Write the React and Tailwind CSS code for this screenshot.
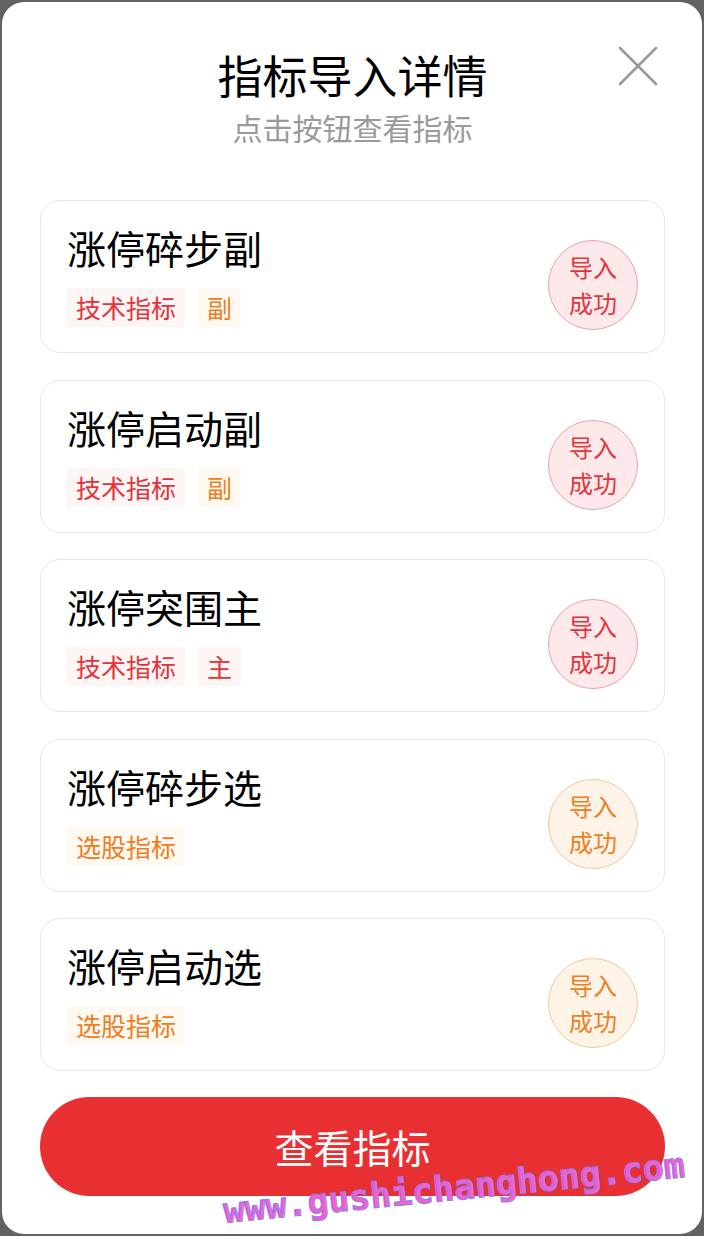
import React from 'react'

const items = [
  { name: '涨停碎步副', tags: [{ label: '技术指标', tone: 'red' }, { label: '副', tone: 'orange' }], tone: 'red' },
  { name: '涨停启动副', tags: [{ label: '技术指标', tone: 'red' }, { label: '副', tone: 'orange' }], tone: 'red' },
  { name: '涨停突围主', tags: [{ label: '技术指标', tone: 'red' }, { label: '主', tone: 'red' }], tone: 'red' },
  { name: '涨停碎步选', tags: [{ label: '选股指标', tone: 'orange' }], tone: 'orange' },
  { name: '涨停启动选', tags: [{ label: '选股指标', tone: 'orange' }], tone: 'orange' },
]

const tagTone = {
  red: 'bg-[#fef5f5] text-[#e5323a]',
  orange: 'bg-[#fff9f1] text-[#f07c1c]',
}

const badgeTone = {
  red: 'bg-[#fde8ea] border-[#e8a3ac] text-[#e3343c]',
  orange: 'bg-[#fdf3e6] border-[#ecc9a2] text-[#ef7e1e]',
}

function Card({ item }) {
  return (
    <div className="flex justify-between h-[153px] rounded-[20px] border border-[#e6e6e6] bg-white pl-[26px] pr-[26px] pt-[22px]">
      <div className="flex flex-col">
        <p className="text-[39px] leading-[48px] text-black">{item.name}</p>
        <div className="flex gap-[13px] mt-[17px]">
          {item.tags.map((t) => (
            <span key={t.label} className={`h-[39px] px-[9px] flex items-center text-[25px] leading-none ${tagTone[t.tone]}`}>
              {t.label}
            </span>
          ))}
        </div>
      </div>
      <div className={`mt-[17px] w-[90px] h-[90px] rounded-full border flex flex-col items-center justify-center text-[24px] leading-[36px] ${badgeTone[item.tone]}`}>
        <span>导入</span>
        <span>成功</span>
      </div>
    </div>
  )
}

export default function App() {
  return (
    <div className="h-[1236px] bg-[#626262] p-[2px] font-['Noto_Sans_CJK_SC','Noto_Sans',sans-serif]">
      <div className="relative h-full bg-white rounded-[22px] pl-[38px] pr-[37px] flex flex-col">
        {/* header */}
        <div className="pt-[44px] flex flex-col items-center">
          <h1 className="text-[45px] leading-[58px] text-black">指标导入详情</h1>
          <p className="mt-[-2px] text-[30px] leading-[50px] text-[#9a9a9a]">点击按钮查看指标</p>
        </div>
        <button className="absolute right-[42px] top-[42px] w-[44px] h-[44px] flex items-center justify-center">
          <svg width="40" height="40" viewBox="0 0 40 40" fill="none" stroke="#999" strokeWidth="2.5" strokeLinecap="round">
            <path d="M2 2 L38 38 M38 2 L2 38" />
          </svg>
        </button>

        <div className="mt-[48px] flex flex-col gap-[26.5px]">
          {items.map((it) => (
            <Card key={it.name} item={it} />
          ))}
        </div>

        <button className="mt-[26px] h-[99px] rounded-full bg-[#e83032] text-white text-[39px] leading-none">
          查看指标
        </button>

        {/* watermark */}
        <div className="absolute left-[217px] top-[1166px] w-[470px] text-center rotate-[-5.7deg] text-[35px] leading-[40px] font-semibold text-[#f260c8] [-webkit-text-stroke:1px_#8c7eff] font-['DejaVu_Sans_Mono',monospace] pointer-events-none">
          www.gushichanghong.com
        </div>
      </div>
    </div>
  )
}
